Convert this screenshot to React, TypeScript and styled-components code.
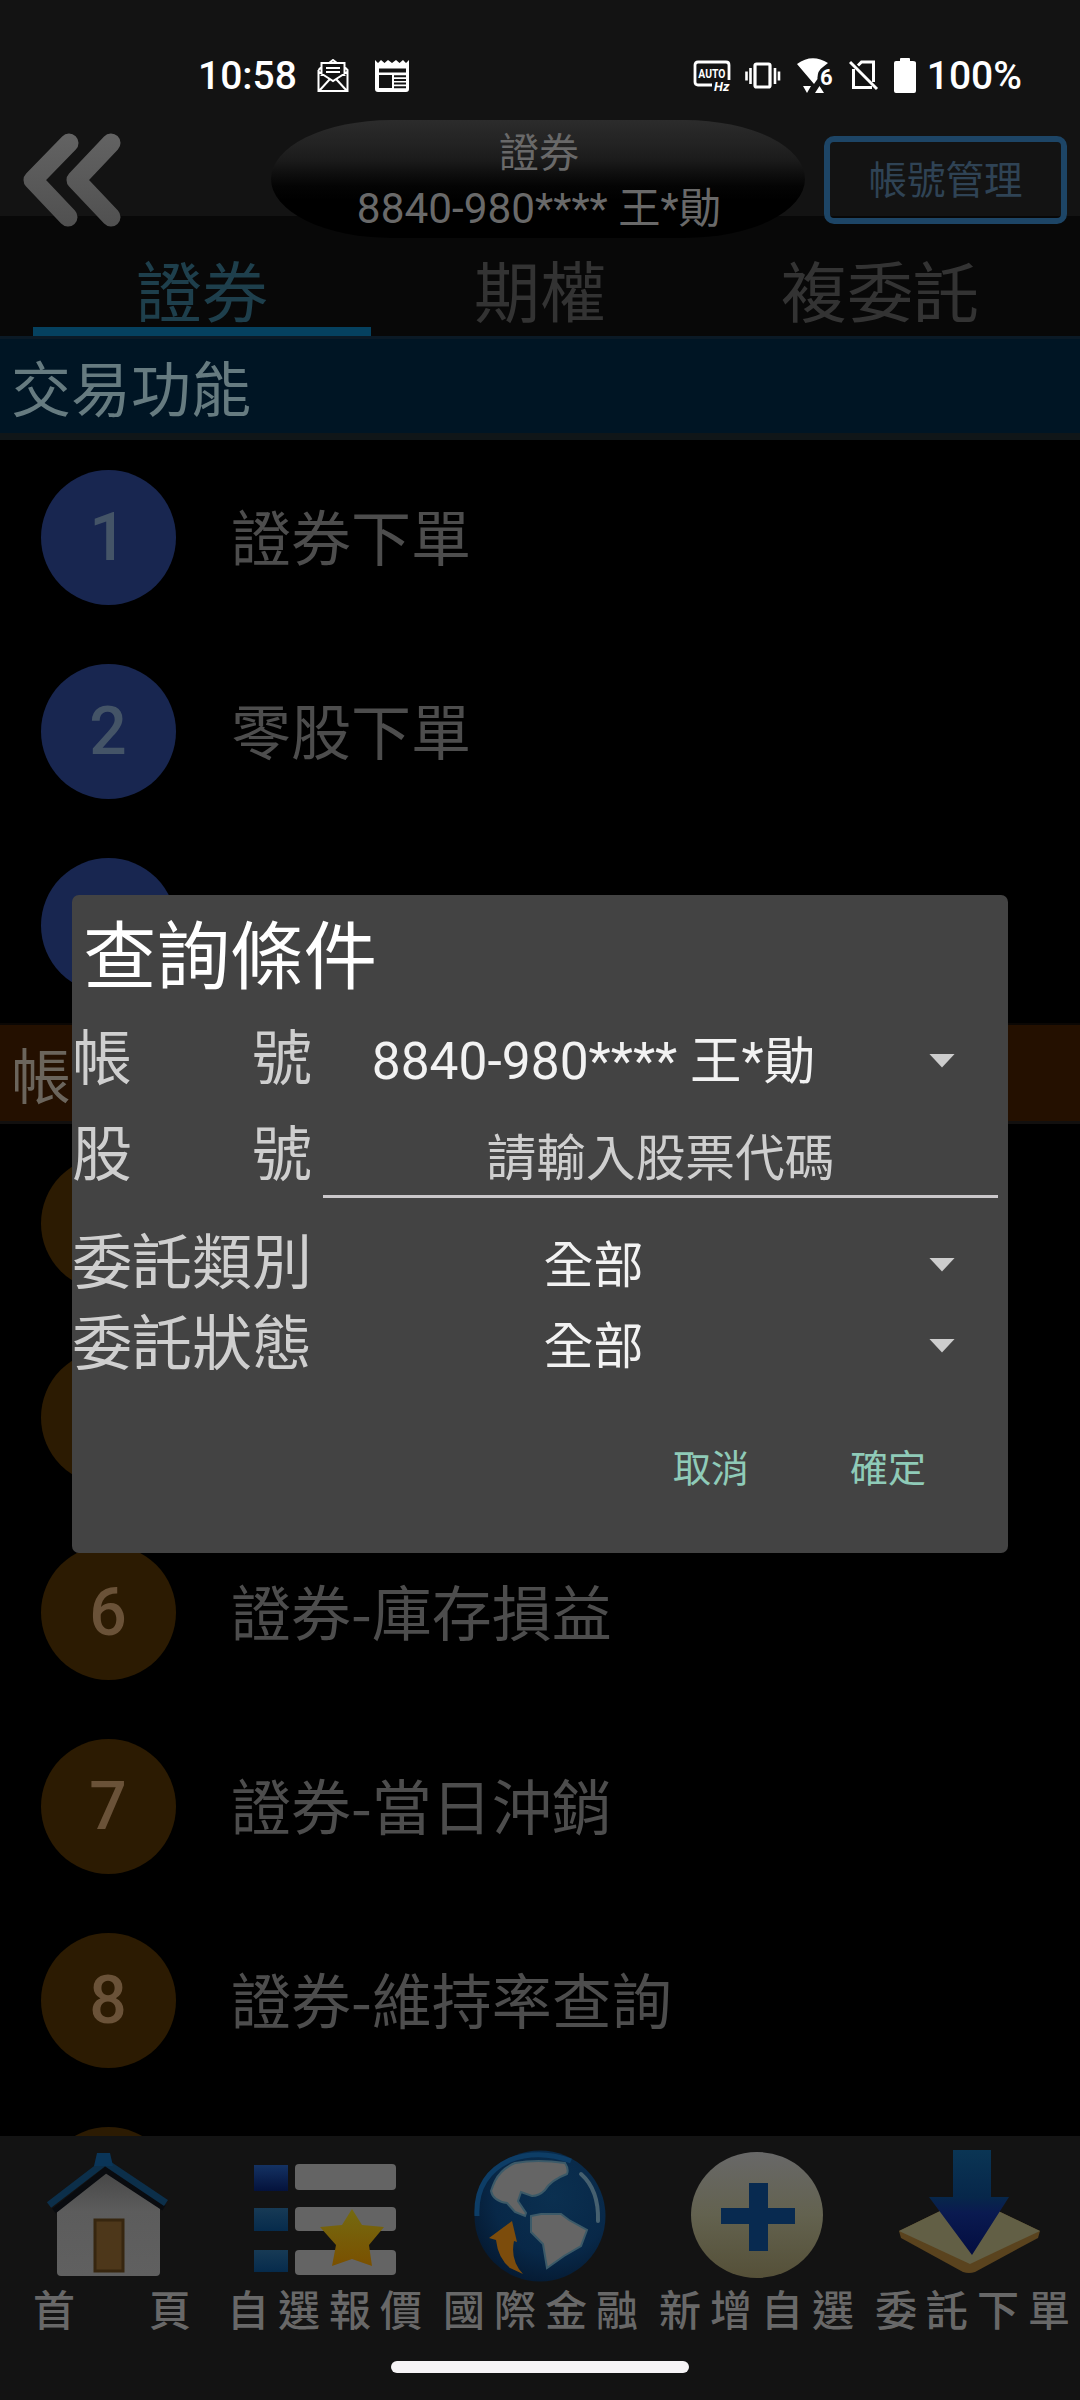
import React from 'react';
import styled, { createGlobalStyle } from 'styled-components';

const GlobalStyle = createGlobalStyle`
  *, *::before, *::after { box-sizing: border-box; }
  html, body { margin: 0; padding: 0; background: #000; }
  body { font-family: Roboto, "Noto Sans CJK TC", sans-serif; }
  button, input { font: inherit; border: 0; background: none; padding: 0; margin: 0; }
`;

const Screen = styled.div`
  position: relative;
  width: 1080px;
  height: 2400px;
  overflow: hidden;
  display: flex;
  flex-direction: column;
  background: #000;
`;

const TopArea = styled.header`
  flex: none;
  height: 336px;
  display: flex;
  flex-direction: column;
  background: linear-gradient(#131313 0 216px, #080808 216px);
`;

const StatusBar = styled.div`
  height: 120px;
  padding: 31px 58px 0 198px;
  display: flex;
  align-items: center;
  justify-content: space-between;
  color: #fff;
  font-size: 39px;
  font-weight: 500;
  line-height: 46px;
`;

const StatusGroup = styled.div<{ $gap: number }>`
  display: flex;
  align-items: center;
  gap: ${(p) => p.$gap}px;
  svg { display: block; flex: none; }
`;

const AppBar = styled.div`
  height: 120px;
  display: flex;
  align-items: flex-start;
  justify-content: space-between;
  padding: 0 13px 0 20px;
`;

const BackButton = styled.button`
  width: 106px;
  height: 120px;
  display: block;
`;

const AccountPill = styled.div`
  width: 534px;
  height: 118px;
  margin-left: 64px;
  margin-right: -62px;
  border-radius: 120px / 59px;
  background: linear-gradient(#2c2c2c 0, #262626 12%, #222 22%, #1b1b1b 34%, #101010 44%, #040404 56%, #000 68%);
  display: flex;
  flex-direction: column;
  align-items: center;
  padding: 9px 0 0 2px;
  color: #696969;
`;

const PillTitle = styled.div`
  font-size: 40px;
  line-height: 50px;
`;

const PillAccount = styled.div`
  font-size: 42.3px;
  line-height: 59px;
  white-space: nowrap;
`;

const ManageButton = styled.button`
  width: 243px;
  height: 88px;
  margin-top: 16px;
  border: 6px solid #1d4566;
  border-radius: 10px;
  color: #2f4355;
  font-size: 38.5px;
  line-height: 75px;
`;

const Tabs = styled.nav`
  height: 96px;
  display: grid;
  grid-template-columns: 400px 280px 400px;
`;

const Tab = styled.div<{ $active?: boolean }>`
  display: flex;
  flex-direction: column;
  align-items: center;
  font-size: 66px;
  line-height: 87px;
  padding-top: 11px;
  color: ${(p) => (p.$active ? '#1e3f4c' : '#333')};
  border-bottom: 1px solid #161616;
`;

const TabStack = styled.div`
  width: 338px;
  display: flex;
  flex-direction: column;
  align-items: center;
  padding-left: 4px;
`;

const TabIndicator = styled.div`
  width: 338px;
  height: 9px;
  flex: none;
  margin: -11px 0 0 0;
  background: #05415f;
`;

const List = styled.main`
  flex: none;
  height: 1800px;
  overflow: hidden;
`;

const SectionHeader = styled.div<{ $tone: 'blue' | 'orange' }>`
  height: 104px;
  padding-left: 11px;
  font-size: 60px;
  line-height: 112px;
  color: ${(p) => (p.$tone === 'blue' ? '#667b80' : '#6b655c')};
  background: ${(p) =>
    p.$tone === 'blue'
      ? 'linear-gradient(#0b1a26 0 3px, #001524 3px 97px, #101618 97px)'
      : 'linear-gradient(#0b0704 0 2px, #241000 2px 98px, #12100f 98px 101px, #000 101px)'};
`;

const Row = styled.div`
  height: 194.2px;
  padding-left: 41px;
  display: flex;
  align-items: center;
  gap: 55px;
`;

const Badge = styled.div<{ $tone: 'blue' | 'orange' }>`
  width: 135px;
  height: 135px;
  flex: none;
  border-radius: 50%;
  display: flex;
  align-items: center;
  justify-content: center;
  padding-right: 1px;
  font-size: 66px;
  font-weight: 500;
  color: ${(p) => (p.$tone === 'blue' ? '#445467' : '#6a5238')};
  background: ${(p) => (p.$tone === 'blue' ? '#182650' : '#2c1b02')};
`;

const RowLabel = styled.div`
  font-family: "Noto Sans CJK TC", sans-serif;
  font-size: 60px;
  line-height: 72px;
  padding-bottom: 4px;
  color: #4d4d4d;
  white-space: nowrap;
`;

const BottomBar = styled.footer`
  flex: 1;
  background: #131313;
  display: flex;
  flex-direction: column;
  align-items: center;
`;

const NavItems = styled.nav`
  width: 1080px;
  height: 225px;
  display: grid;
  grid-template-columns: repeat(5, 216px);
`;

const NavItem = styled.div`
  display: flex;
  flex-direction: column;
  align-items: center;
  svg { display: block; }
`;

const NavLabel = styled.div<{ $short: boolean }>`
  width: ${(p) => (p.$short ? 158 : 195)}px;
  margin-left: ${(p) => (p.$short ? 8 : 1)}px;
  display: flex;
  justify-content: space-between;
  margin-top: 3px;
  font-size: 42px;
  font-weight: 500;
  line-height: 50px;
  color: #686868;
`;

const HomeHandle = styled.div`
  width: 298px;
  height: 12px;
  border-radius: 6px;
  background: #f6f4f6;
`;

const Scrim = styled.div`
  position: absolute;
  inset: 0;
  padding-top: 48px;
  display: flex;
  align-items: center;
  justify-content: center;
`;

const Dialog = styled.section`
  width: 936px;
  height: 658px;
  border-radius: 7px;
  background: #434343;
  display: flex;
  flex-direction: column;
`;

const DialogTitle = styled.h1`
  margin: 0;
  height: 124px;
  padding-left: 11px;
  font-size: 73.5px;
  font-weight: 400;
  line-height: 127px;
  color: #fff;
`;

const Field = styled.div<{ $h: number }>`
  height: ${(p) => p.$h}px;
  display: flex;
`;

const FieldLabel = styled.div<{ $h: number }>`
  width: 240px;
  flex: none;
  display: flex;
  justify-content: space-between;
  font-size: 60px;
  line-height: ${(p) => p.$h}px;
  color: #cfcfcf;
`;

const Select = styled.div<{ $h: number }>`
  flex: 1;
  height: ${(p) => p.$h}px;
  padding-right: 53px;
  display: flex;
  align-items: center;
  white-space: nowrap;
`;

const SelectText = styled.span<{ $size: number }>`
  flex: 1;
  text-align: center;
  padding: 2px 54px 0 0;
  font-size: ${(p) => p.$size}px;
  line-height: 82px;
  color: #f2f2f2;
`;

const Caret = styled.i`
  width: 26px;
  height: 14px;
  background: #cdcdcd;
  clip-path: polygon(0 0, 100% 0, 50% 100%);
`;

const CodeInput = styled.div`
  width: 675px;
  height: 88px;
  margin-left: 11px;
  border-bottom: 3px solid #cbc8cb;
  text-align: center;
  font-size: 49.7px;
  line-height: 98px;
  color: #cfcfcf;
`;

const Actions = styled.div`
  margin-top: auto;
  height: 167px;
  display: flex;
  justify-content: flex-end;
  gap: 101px;
  padding-right: 82px;
`;

const ActionButton = styled.button`
  height: 167px;
  font-size: 38px;
  line-height: 167px;
  color: #8fcbb8;
`;

const Chars = ({ text }: { text: string }) => (
  <>
    {Array.from(text).map((c, i) => (
      <span key={i}>{c}</span>
    ))}
  </>
);

const MailIcon = () => (
  <svg width="32" height="34" viewBox="0 0 32 34" fill="none" stroke="#fff" strokeWidth="2">
    <path d="M4.500 17V4h23v13M1.500 11v21h29V11l-3-3M1.500 11l3-3M2 13l14 9 14-9M2 32l11-12M30 32 19 20M9 9h14M9 13h14" />
    <path d="M12 4l4-3 4 3" />
  </svg>
);

const NewsIcon = () => (
  <svg width="36" height="33" viewBox="0 0 36 33">
    <path fill="#fff" d="M1 1l3 3 3-3 3.500 3 3.500-3 4 3 4-3 3.500 3 3.500-3 3 3 3-3v29q0 3-3 3H4q-3 0-3-3z" />
    <path fill="#131313" d="M5 9.500h27v4H5zM5 16h13v13H5z" />
    <path stroke="#131313" strokeWidth="2" d="M20 17.200h12M20 20.900h12M20 24.600h12M20 28.200h12" />
  </svg>
);

const AutoHzIcon = () => (
  <svg width="40" height="34" viewBox="0 0 40 34">
    <path fill="none" stroke="#fff" strokeWidth="2.800" d="M19 26H5q-3 0-3-3V6q0-3 3-3h28q3 0 3 3v15" />
    <text x="18.800" y="19" fontSize="12" fontWeight="700" textAnchor="middle" fill="#fff" textLength="27" lengthAdjust="spacingAndGlyphs">AUTO</text>
    <text x="21" y="32" fontSize="13" fontWeight="700" fontStyle="italic" fill="#fff">Hz</text>
  </svg>
);

const VibrateIcon = () => (
  <svg width="36" height="28" viewBox="0 0 36 28" fill="none" stroke="#fff">
    <rect x="10" y="2" width="15" height="23" rx="1.500" strokeWidth="3.200" />
    <path strokeWidth="2.600" d="M5.500 6v16M30 6v16M1.500 9.500v9M34 9.500v9" />
  </svg>
);

const WifiIcon = () => (
  <svg width="38" height="37" viewBox="0 0 38 37">
    <path fill="#fff" d="M1 7Q16-4 32 6L27 10q-6 4-5.500 12l-3.500 5z" />
    <text x="24" y="28" fontSize="22" fontWeight="700" fill="#fff">6</text>
    <path fill="#fff" d="M7 29h8l-4 7zM19 36h9l-4.500-7z" />
  </svg>
);

const NoSimIcon = () => (
  <svg width="30" height="31" viewBox="0 0 30 31" fill="none" stroke="#fff" strokeWidth="3">
    <path d="M9 5.500l3.500-3.500h12v20M4.500 9v18.500H23M1 2l27 27" />
  </svg>
);

const BatteryIcon = () => (
  <svg width="22" height="37" viewBox="0 0 22 37" fill="#fff">
    <path d="M6 4V2q0-1 1-1h8q1 0 1 1v2h3q3 0 3 2v28q0 2-2 2H2q-2 0-2-2V6q0-2 2-2z" />
  </svg>
);

const BackIcon = () => (
  <svg width="106" height="120" viewBox="20 120 106 120" fill="none" stroke="url(#back)" strokeWidth="19" strokeLinecap="round" strokeLinejoin="round">
    <defs>
      <linearGradient id="back" x1="0" y1="133" x2="0" y2="227" gradientUnits="userSpaceOnUse">
        <stop offset="0" stopColor="#636363" />
        <stop offset="1" stopColor="#505050" />
      </linearGradient>
    </defs>
    <path d="M69 143 33 180l35 37M111 143 76 180l35 37" />
  </svg>
);

const HomeIcon = () => (
  <svg width="216" height="148" viewBox="0 2136 216 148">
    <defs>
      <linearGradient id="wall" x1="0" y1="0" x2="0" y2="1">
        <stop offset="0" stopColor="#454545" />
        <stop offset=".4" stopColor="#5c5c5c" />
        <stop offset="1" stopColor="#606060" />
      </linearGradient>
    </defs>
    <path fill="url(#wall)" d="M57 2206l50-38 53 38v66q0 4-4 4H61q-4 0-4-4z" />
    <path fill="none" stroke="#090b0f" strokeWidth="6" d="M54 2211l52-41 58 38" />
    <path fill="none" stroke="#0c2f4a" strokeWidth="7" d="M49 2205l56-43 61 41" />
    <path fill="#0a3558" d="M97 2153h13l3 13H94z" />
    <path fill="#4d371a" stroke="#37260f" strokeWidth="3" d="M95 2220h28v51H95z" />
  </svg>
);

const ListIcon = () => (
  <svg width="216" height="148" viewBox="216 2136 216 148">
    <defs>
      <linearGradient id="navy" x1="0" y1="0" x2="0" y2="1">
        <stop offset="0" stopColor="#143263" />
        <stop offset="1" stopColor="#04123c" />
      </linearGradient>
      <linearGradient id="azure" x1="0" y1="0" x2="0" y2="1">
        <stop offset="0" stopColor="#173a55" />
        <stop offset="1" stopColor="#062b4c" />
      </linearGradient>
      <linearGradient id="star" x1="0" y1="0" x2="0" y2="1">
        <stop offset="0" stopColor="#746a10" />
        <stop offset="1" stopColor="#7a5000" />
      </linearGradient>
    </defs>
    <path fill="url(#navy)" d="M254 2165h34v26h-34z" />
    <path fill="url(#azure)" d="M254 2208h34v23h-34z" />
    <path fill="url(#azure)" d="M254 2250h34v22h-34z" />
    <g fill="#646464">
      <rect x="295" y="2164" width="101" height="26" rx="4" />
      <rect x="295" y="2207" width="101" height="24" rx="4" />
      <rect x="295" y="2250" width="101" height="25" rx="4" />
    </g>
    <path fill="url(#star)" d="M352 2209l10 16 22 2-15 18 3 21-20-7-20 7 4-21-16-18 22-2z" />
  </svg>
);

const GlobeIcon = () => (
  <svg width="216" height="148" viewBox="431 2136 216 148">
    <defs>
      <radialGradient id="sea" cx=".6" cy=".35" r=".75">
        <stop offset="0" stopColor="#0b3050" />
        <stop offset=".6" stopColor="#082848" />
        <stop offset="1" stopColor="#04162c" />
      </radialGradient>
    </defs>
    <circle cx="539" cy="2216" r="65.500" fill="url(#sea)" />
    <path fill="none" stroke="#0d3d66" strokeWidth="5" d="M476 2216Q474 2176 509 2160 538 2149 570 2161" />
    <path fill="#656565" stroke="#3c5a68" strokeWidth="2" d="M494 2181q6-12 20-18 22-4 50 0 4 6 2 11-16 6-22 16-6 6-13 6l-11-4-3 9 8 12-1 3-10-4-8-9q-14-2-16-12 2-6 4-10z" />
    <path fill="#656565" stroke="#3c5a68" strokeWidth="2" d="M530 2216l10-2h20l8 6 18 10-6 16-17 10-17 12-4-24-12-12z" />
    <path fill="none" stroke="#46606f" strokeWidth="4" strokeLinecap="round" d="M580 2174q18 16 17 47" />
    <path fill="#7c4c0c" d="M511 2221l-23 17 7 2q2 18 14 28l13 6q-13-14-9-33l3 1z" />
  </svg>
);

const PlusIcon = () => (
  <svg width="216" height="148" viewBox="648 2136 216 148">
    <defs>
      <linearGradient id="disc" x1="0" y1="0" x2="0" y2="1">
        <stop offset="0" stopColor="#686868" />
        <stop offset=".5" stopColor="#63624f" />
        <stop offset="1" stopColor="#555038" />
      </linearGradient>
    </defs>
    <ellipse cx="757" cy="2215" rx="66" ry="63" fill="url(#disc)" />
    <path fill="#082a50" d="M749 2183h19v25h27v16h-27v27h-19v-27h-28v-16h28z" />
  </svg>
);

const OrderIcon = () => (
  <svg width="216" height="148" viewBox="864 2136 216 148">
    <defs>
      <linearGradient id="arrow" x1="0" y1="0" x2="0" y2="1">
        <stop offset="0" stopColor="#0a3554" />
        <stop offset=".45" stopColor="#07274a" />
        <stop offset=".6" stopColor="#0a1a50" />
        <stop offset="1" stopColor="#030d40" />
      </linearGradient>
    </defs>
    <path fill="#5a431e" d="M899 2231l70-34 71 34-2 7-63 34q-6 2-12 0l-62-34z" />
    <path fill="#625f45" d="M899 2231l70-34 71 34-70 33z" />
    <path fill="url(#arrow)" d="M953 2150h38v47h18l-37 58-43-58h24z" />
  </svg>
);

type RowItem = { no?: number; label?: string };

const tradeRows: RowItem[] = [{ no: 1, label: '證券下單' }, { no: 2, label: '零股下單' }, {}];
const accountRows: RowItem[] = [
  {},
  {},
  { no: 6, label: '證券-庫存損益' },
  { no: 7, label: '證券-當日沖銷' },
  { no: 8, label: '證券-維持率查詢' },
  {},
];
const navItems = [
  { label: '首頁', icon: <HomeIcon /> },
  { label: '自選報價', icon: <ListIcon /> },
  { label: '國際金融', icon: <GlobeIcon /> },
  { label: '新增自選', icon: <PlusIcon /> },
  { label: '委託下單', icon: <OrderIcon /> },
];

const Rows = ({ items, tone }: { items: RowItem[]; tone: 'blue' | 'orange' }) => (
  <>
    {items.map((item, i) => (
      <Row key={i}>
        <Badge $tone={tone}>{item.no}</Badge>
        {item.label && <RowLabel>{item.label}</RowLabel>}
      </Row>
    ))}
  </>
);

export default function App() {
  return (
    <Screen>
      <GlobalStyle />
      <TopArea>
        <StatusBar>
          <StatusGroup $gap={20}>
            <span>10:58</span>
            <StatusGroup $gap={25}>
              <MailIcon />
              <NewsIcon />
            </StatusGroup>
          </StatusGroup>
          <StatusGroup $gap={15}>
            <StatusGroup $gap={12}>
              <AutoHzIcon />
              <VibrateIcon />
            </StatusGroup>
            <WifiIcon />
            <NoSimIcon />
            <StatusGroup $gap={11}>
              <BatteryIcon />
              <span>100%</span>
            </StatusGroup>
          </StatusGroup>
        </StatusBar>
        <AppBar>
          <BackButton aria-label="返回">
            <BackIcon />
          </BackButton>
          <AccountPill>
            <PillTitle>證券</PillTitle>
            <PillAccount>8840-980**** 王*勛</PillAccount>
          </AccountPill>
          <ManageButton>帳號管理</ManageButton>
        </AppBar>
        <Tabs>
          <Tab $active>
            <TabStack>
              證券
              <TabIndicator />
            </TabStack>
          </Tab>
          <Tab>期權</Tab>
          <Tab>複委託</Tab>
        </Tabs>
      </TopArea>
      <List>
        <SectionHeader $tone="blue">交易功能</SectionHeader>
        <Rows items={tradeRows} tone="blue" />
        <SectionHeader $tone="orange">帳</SectionHeader>
        <Rows items={accountRows} tone="orange" />
      </List>
      <BottomBar>
        <NavItems>
          {navItems.map((item) => (
            <NavItem key={item.label}>
              {item.icon}
              <NavLabel $short={item.label.length === 2}>
                <Chars text={item.label} />
              </NavLabel>
            </NavItem>
          ))}
        </NavItems>
        <HomeHandle />
      </BottomBar>
      <Scrim>
        <Dialog>
          <DialogTitle>查詢條件</DialogTitle>
          <Field $h={91}>
            <FieldLabel $h={81}>
              <Chars text="帳號" />
            </FieldLabel>
            <Select $h={83}>
              <SelectText $size={51.5}>8840-980**** 王*勛</SelectText>
              <Caret />
            </Select>
          </Field>
          <Field $h={112}>
            <FieldLabel $h={92}>
              <Chars text="股號" />
            </FieldLabel>
            <CodeInput>請輸入股票代碼</CodeInput>
          </Field>
          <Field $h={81}>
            <FieldLabel $h={84}>委託類別</FieldLabel>
            <Select $h={85}>
              <SelectText $size={50}>全部</SelectText>
              <Caret />
            </Select>
          </Field>
          <Field $h={81}>
            <FieldLabel $h={84}>委託狀態</FieldLabel>
            <Select $h={85}>
              <SelectText $size={50}>全部</SelectText>
              <Caret />
            </Select>
          </Field>
          <Actions>
            <ActionButton>取消</ActionButton>
            <ActionButton>確定</ActionButton>
          </Actions>
        </Dialog>
      </Scrim>
    </Screen>
  );
}
